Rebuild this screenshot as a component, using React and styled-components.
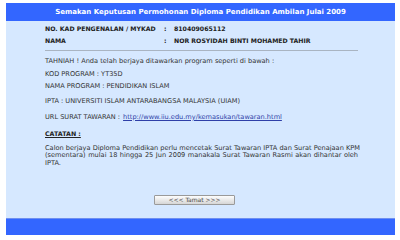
import styled, { createGlobalStyle } from "styled-components";

const GlobalStyle = createGlobalStyle`
  html, body {
    margin: 0;
    padding: 0;
    background: #ffffff;
  }
  body {
    font-family: "DejaVu Sans", Verdana, sans-serif;
  }
`;

const Page = styled.div`
  width: 400px;
  height: 240px;
  padding: 3px 5px 0 6px;
  box-sizing: border-box;
`;

const Panel = styled.div`
  width: 389px;
  display: flex;
  flex-direction: column;
`;

const Bar = styled.div`
  background: #3366ff;
  height: ${({ $h }) => $h}px;
  display: flex;
  align-items: center;
  justify-content: center;
  color: #ffffff;
  font-weight: bold;
  font-size: 7px;
  border-top: ${({ $edge }) => ($edge ? "1px solid #6f8ff0" : "none")};
  box-sizing: border-box;
`;

const Body = styled.div`
  background: #d6e8ff;
  padding: 1px 36px 0 39px;
  height: 197px;
  box-sizing: border-box;
  color: #333333;
  font-size: 6.6px;
`;

const InfoRow = styled.div`
  display: grid;
  grid-template-columns: 119px 10px 1fr;
  font-weight: bold;
  font-size: 6.2px;
  color: #222222;
  height: 12px;
  align-items: center;
  white-space: nowrap;
`;

const Rule = styled.hr`
  border: none;
  border-top: 1px solid #a9b4c2;
  margin: 4px 0 5px 0;
  width: 313px;
`;

const Line = styled.div`
  height: ${({ $h }) => $h || 15.5}px;
  display: flex;
  align-items: ${({ $end }) => ($end ? "flex-end" : "center")};
`;

const Link = styled.a`
  color: #2f3fa8;
  text-decoration: underline;
  margin-left: 3px;
`;

const NoteTitle = styled.div`
  font-weight: bold;
  text-decoration: underline;
  font-size: 6.3px;
  color: #222222;
  margin: 5px 0 8px 0;
`;

const Note = styled.div`
  width: 313px;
  line-height: 7.6px;
`;

const JustLine = styled.div`
  text-align: justify;
  text-align-last: ${({ $last }) => ($last ? "left" : "justify")};
  white-space: nowrap;
`;

const ButtonRow = styled.div`
  display: flex;
  justify-content: center;
  margin-top: 28px;
  padding-right: 15px;
`;

const Button = styled.button`
  width: 81px;
  height: 10px;
  padding: 0;
  border: 1px solid #9a9a9a;
  border-radius: 1px;
  background: linear-gradient(#fdfdfd, #e6e6e6 60%, #d6d6d6);
  font-family: "DejaVu Sans", Verdana, sans-serif;
  font-size: 6px;
  color: #444444;
  line-height: 8px;
  overflow: visible;
`;

export default function App() {
  return (
    <>
      <GlobalStyle />
      <Page>
        <Panel>
          <Bar $h={18}>
            Semakan Keputusan Permohonan Diploma Pendidikan Ambilan Julai 2009
          </Bar>
          <Body>
            <InfoRow>
              <span>NO. KAD PENGENALAN / MYKAD</span>
              <span>:</span>
              <span>810409065112</span>
            </InfoRow>
            <InfoRow>
              <span>NAMA</span>
              <span>:</span>
              <span>NOR ROSYIDAH BINTI MOHAMED TAHIR</span>
            </InfoRow>
            <Rule />
            <Line $h={9}>TAHNIAH ! Anda telah berjaya ditawarkan program seperti di bawah :</Line>
            <Line $h={13} $end>KOD PROGRAM : YT35D</Line>
            <Line>NAMA PROGRAM : PENDIDIKAN ISLAM</Line>
            <Line>IPTA : UNIVERSITI ISLAM ANTARABANGSA MALAYSIA (UIAM)</Line>
            <Line>
              URL SURAT TAWARAN :
              <Link href="#">http://www.iiu.edu.my/kemasukan/tawaran.html</Link>
            </Line>
            <NoteTitle>CATATAN :</NoteTitle>
            <Note>
              <JustLine>
                Calon berjaya Diploma Pendidikan perlu mencetak Surat Tawaran IPTA dan Surat Penajaan KPM
              </JustLine>
              <JustLine>
                (sementara) mulai 18 hingga 25 Jun 2009 manakala Surat Tawaran Rasmi akan dihantar oleh
              </JustLine>
              <JustLine $last>IPTA.</JustLine>
            </Note>
            <ButtonRow>
              <Button>&lt;&lt;&lt; Tamat &gt;&gt;&gt;</Button>
            </ButtonRow>
          </Body>
          <Bar $h={17} $edge />
        </Panel>
      </Page>
    </>
  );
}
